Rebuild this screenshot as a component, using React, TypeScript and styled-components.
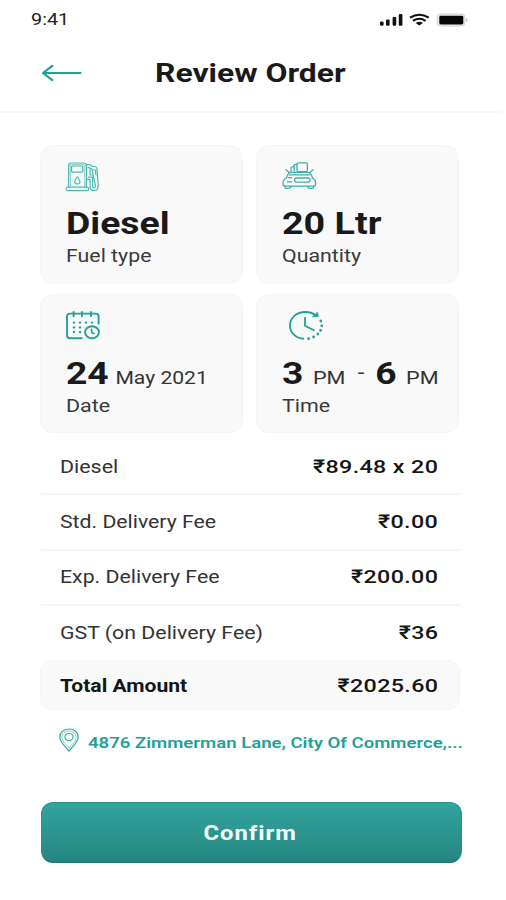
import React from "react";
import styled, { createGlobalStyle } from "styled-components";

const TEAL = "#1fa198";

const GlobalStyle = createGlobalStyle`
  *, *::before, *::after { box-sizing: border-box; }
  body {
    margin: 0;
    background: #fff;
    font-family: Roboto, "Noto Sans", sans-serif;
    color: #1a1a1a;
  }
`;

const Screen = styled.div`
  width: 506px;
  height: 900px;
  display: flex;
  flex-direction: column;
  background: #fff;
  overflow: hidden;
`;

/* Expanded-width lettering, anchored to one edge of its box. */
const Wide = styled.span<{ $x?: number; $from?: string }>`
  display: inline-block;
  white-space: nowrap;
  transform: scaleX(${(p) => p.$x ?? 1.2});
  transform-origin: ${(p) => p.$from ?? "left"} center;
`;

const StatusBar = styled.div`
  height: 38px;
  padding: 0 38px 0 31px;
  display: flex;
  justify-content: space-between;
  align-items: center;
`;

const Clock = styled.div`
  padding-top: 2px;
  font-size: 16.5px;
  line-height: 20px;
  color: #222;
`;

const StatusIcons = styled.svg`
  width: 90px;
  height: 16px;
  margin-top: 2px;
  display: block;
`;

const Header = styled.header`
  width: 501px;
  height: 75px;
  padding: 0 0 4px 41px;
  display: flex;
  align-items: center;
  border-bottom: 2px solid #f7f7f7;
`;

const BackButton = styled.button`
  width: 42px;
  height: 20px;
  padding: 0;
  border: 0;
  background: none;
  svg { display: block; }
`;

const Title = styled.h1`
  margin: 1px 0 0 72px;
  font-size: 26px;
  line-height: 32px;
  font-weight: 700;
`;

const Cards = styled.section`
  margin: 32px 0 0 40px;
  display: grid;
  grid-template-columns: 203px 203px;
  grid-template-rows: 139px 139px;
  gap: 10px 13px;
`;

const Card = styled.article<{ $drop?: number }>`
  padding: 15px 0 0 25px;
  border: 1px solid #f5f5f5;
  border-radius: 13px;
  background: #f9f9f9;
  svg {
    display: block;
    margin: 0 0 ${(p) => p.$drop ?? 0}px -1px;
  }
`;

const CardValue = styled.div`
  height: 32px;
  padding-top: 15px;
  box-sizing: content-box;
  font-size: 31px;
  line-height: 32px;
  font-weight: 700;
`;

const Part = styled.span<{ $gap: number; $small?: boolean }>`
  margin-left: ${(p) => p.$gap}px;
  font-size: ${(p) => (p.$small ? 18 : 31)}px;
  font-weight: ${(p) => (p.$small ? 400 : 700)};
  color: ${(p) => (p.$small ? "#333" : "inherit")};
`;

const MonthYear = styled(Part)`
  font-size: 17.6px;
`;

const Dash = styled(Part)`
  font-size: 20px;
  position: relative;
  top: -5px;
`;

const CardLabel = styled.div`
  margin-top: 6px;
  font-size: 18px;
  line-height: 20px;
  color: #3a3a3a;
`;

const Fees = styled.section`
  width: 420px;
  margin: 5px 0 0 41px;
`;

const Fee = styled.div`
  height: 55.4px;
  padding: 0 23px 0 19px;
  display: flex;
  align-items: center;
  justify-content: space-between;
  & + & { border-top: 2px solid #f6f6f6; padding-bottom: 1px; }
  &:first-child { padding-top: 1px; }
`;

const FeeName = styled.div<{ $bold?: boolean }>`
  font-size: 18px;
  font-weight: ${(p) => (p.$bold ? 700 : 400)};
  color: ${(p) => (p.$bold ? "#161616" : "#333")};
`;

const Amount = styled.div`
  font-size: 19px;
  font-weight: 500;
  letter-spacing: 0.3px;
  color: #161616;
`;

const Total = styled.div`
  width: 420px;
  height: 50px;
  margin-left: 40px;
  padding: 2px 21px 0 19px;
  display: flex;
  align-items: center;
  justify-content: space-between;
  border: 1px solid #f5f5f5;
  border-radius: 12px;
  background: #f9f9f9;
`;

const Address = styled.div`
  height: 24px;
  margin: 18px 0 0 59px;
  display: flex;
  align-items: center;
  gap: 9px;
  font-size: 15.5px;
  line-height: 20px;
  font-weight: 600;
  color: ${TEAL};
  svg { display: block; flex: none; }
`;

const AddressText = styled.div`
  padding-top: 6px;
`;

const Confirm = styled.button`
  width: 421px;
  height: 61px;
  margin: 50px 0 0 40.5px;
  padding: 2px 2px 0 0;
  border: 1px solid #25918a;
  border-bottom-color: #1b756f;
  border-radius: 12px;
  background: linear-gradient(#31a59e, #25857f);
  color: #f4fffd;
  font: 700 20px Roboto, sans-serif;
  letter-spacing: 0.8px;
`;

const PhoneStatus = () => (
  <StatusIcons viewBox="378 12 90 16">
    <g fill="#111">
      <rect x="380" y="21.6" width="3.6" height="4.2" rx="1.2" />
      <rect x="386" y="19.6" width="3.6" height="6.2" rx="1" />
      <rect x="392.6" y="17" width="3.6" height="8.8" rx="1" />
      <rect x="398.8" y="14" width="3.6" height="11.8" rx="1" />
      <path d="M419.3 25.6 L415.7 22.9 Q419.3 20.6 422.9 22.9 Z" />
    </g>
    <g fill="none" stroke="#111" strokeWidth="2">
      <path d="M410 17.7 Q419.3 11.6 428.8 17.7" />
      <path d="M413 20.9 Q419.3 16.8 425.7 20.9" />
    </g>
    <rect x="437.2" y="14" width="27.6" height="12" rx="3" fill="#eee" stroke="#d0d0d0" />
    <rect x="439.3" y="15.8" width="24" height="8.6" rx="1.4" fill="#050505" />
    <path d="M466.2 18 Q468.8 20 466.2 22 Z" fill="#aaa" />
  </StatusIcons>
);

const ArrowIcon = () => (
  <svg width="42" height="20" viewBox="41 63 42 20" fill="none" stroke={TEAL} strokeWidth="2.2" strokeLinecap="round" strokeLinejoin="round">
    <path d="M80.5 73 H43 M52.3 65.8 L43 73 L52.3 80.2" />
  </svg>
);

const FuelIcon = () => (
  <svg width="36" height="32" viewBox="65 160 36 32" fill="none" stroke="#4dbab1" strokeWidth="1.2" strokeLinejoin="round" strokeLinecap="round">
    <path d="M68.6 186 V164.4 Q68.6 162 71.2 162 H83.6 Q86.4 162 86.4 164.4 V186" />
    <path d="M70.3 186 V165 Q70.3 163.6 71.8 163.6 H83 Q84.7 163.6 84.7 165 V186" strokeWidth=".7" />
    <rect x="66.2" y="186.2" width="22.4" height="3.5" rx="1.5" />
    <rect x="71.6" y="165" width="11.2" height="6.2" rx="1" />
    <path d="M77.3 175.8 Q73.7 180.3 75 182 Q77.3 184 79.7 182 Q80.8 180.2 77.3 175.8 Z" />
    <path d="M86.4 163.7 H90 L92.4 165.5 H95.2 Q97 166 97 168.4 L98.2 184.5 Q98.2 189.6 94 189.6 Q90.3 189.6 90.1 185.5 V178.4 H86.4" />
    <path d="M88 166.4 L92 168 L95.4 184.5 Q95.4 187 94 187 Q92.6 187 92.6 185 V176.2 H88.2 M90 167.2 V174 H93 M92.7 169 H95.3 L96 174" />
  </svg>
);

const CarIcon = () => (
  <svg width="36" height="32" viewBox="281 161 36 32" fill="none" stroke="#3db1a8" strokeWidth="1.3" strokeLinejoin="round" strokeLinecap="round">
    <rect x="297" y="162.8" width="10.4" height="8.8" rx="1.5" />
    <path d="M291 171.6 V168 Q291 166.8 292.4 166.8 H294 V165.4 Q294 164.3 295.4 164.3 H297 M294.2 167 V171.5" />
    <path d="M286 169.8 L289.3 172.5 M313 169.8 L309.6 172.5" />
    <path d="M291 172.4 H308.2 Q310.4 172.4 311.2 174.4 L312.5 178 Q315.6 179.6 315.6 183.2 V184.6 Q315.6 186.2 313.7 186.2 H285.3 Q283 186.2 283 184.5 V183.2 Q283 179.5 286.4 178 L288 174.3 Q288.8 172.4 291 172.4 Z" />
    <path d="M289.5 174.9 H309.7" />
    <path d="M285 186.3 V187.2 Q285 188.4 286.5 188.4 H289 Q290.4 188.4 291.3 186.3 M307.4 186.3 Q308.2 188.4 309.6 188.4 H312.1 Q313.6 188.4 313.6 187.2 V186.3" />
    <rect x="294.6" y="178" width="15.4" height="4.1" rx="2" />
    <path d="M288.3 177.7 H291.6 M287.5 181.9 H291.6" />
  </svg>
);

const CalendarIcon = () => (
  <svg width="36" height="32" viewBox="65 310 36 32" fill="none" stroke={TEAL} strokeWidth="1.9" strokeLinecap="round" strokeLinejoin="round">
    <path d="M98.6 323.5 V316.3 Q98.6 313.6 95.7 313.6 H70 Q67 313.6 67 316.3 V335.2 Q67 338.2 70 338.2 H81.8" />
    <path d="M73.6 312 V316.2 M82 312 V316.2 M91 312 V316.2" />
    <g stroke="none" fill={TEAL}>
      {[74, 80, 86, 92].map((x) => <circle key={x} cx={x} cy="322.6" r="1.2" />)}
      {[74, 80].map((x) => <circle key={x} cx={x} cy="327.4" r="1.2" />)}
      {[74, 80].map((x) => <circle key={x} cx={x} cy="332" r="1.2" />)}
    </g>
    <ellipse cx="92" cy="332.3" rx="6.9" ry="6" />
    <path d="M91.6 329.2 V332.4 L94 333.5" strokeWidth="1.6" />
  </svg>
);

const TimeIcon = () => (
  <svg width="44" height="32" viewBox="281 310 44 32" fill="none" stroke={TEAL} strokeWidth="1.8" strokeLinecap="round" strokeLinejoin="round">
    <path d="M315.5 315.2 Q311.5 312 305.4 312 C296.5 312 289.9 318 289.9 325.3 C289.9 332.6 296 338.2 303.2 338.7" />
    <path d="M305 317.6 V325.8 L314 330.2" />
    <path d="M317.6 312.6 L318.2 316.6 L312.8 316.6 Z" fill={TEAL} strokeWidth=".8" />
    <g stroke="none" fill={TEAL}>
      <circle cx="308.6" cy="338.7" r="1.4" />
      <circle cx="313.6" cy="337" r="1.4" />
      <circle cx="317.8" cy="334" r="1.4" />
      <circle cx="320.6" cy="330.3" r="1.4" />
      <circle cx="321.8" cy="325.8" r="1.4" />
      <circle cx="320.8" cy="321" r="1.4" />
    </g>
  </svg>
);

const PinIcon = () => (
  <svg width="20" height="24" viewBox="59 728 20 24" fill="none" stroke="#3aaba3" strokeWidth="1.2" strokeLinejoin="round">
    <path d="M69 751.2 C65.8 746.5 59.8 742.2 59.8 737.2 C59.8 732.4 63.8 729 69 729 C74.2 729 78.2 732.4 78.2 737.2 C78.2 742.2 72.2 746.5 69 751.2 Z" />
    <path d="M69 748.2 C66.5 744.6 61.8 741 61.8 737.2 C61.8 733.5 65 730.9 69 730.9 C73 730.9 76.2 733.5 76.2 737.2 C76.2 741 71.5 744.6 69 748.2 Z" strokeWidth=".6" />
    <ellipse cx="69" cy="737" rx="4.1" ry="3.5" />
  </svg>
);

const fees = [
  { name: "Diesel", nameX: 1.19, amount: "₹89.48 x 20" },
  { name: "Std. Delivery Fee", nameX: 1.18, amount: "₹0.00" },
  { name: "Exp. Delivery Fee", nameX: 1.183, amount: "₹200.00" },
  { name: "GST (on Delivery Fee)", nameX: 1.185, amount: "₹36" },
];

export default function App() {
  return (
    <Screen>
      <GlobalStyle />
      <StatusBar>
        <Clock><Wide $x={1.2}>9:41</Wide></Clock>
        <PhoneStatus />
      </StatusBar>
      <Header>
        <BackButton aria-label="Back"><ArrowIcon /></BackButton>
        <Title><Wide $x={1.225}>Review Order</Wide></Title>
      </Header>
      <Cards>
        <Card>
          <FuelIcon />
          <CardValue><Wide $x={1.205}>Diesel</Wide></CardValue>
          <CardLabel><Wide $x={1.185}>Fuel type</Wide></CardLabel>
        </Card>
        <Card>
          <CarIcon />
          <CardValue><Wide $x={1.215}>20 Ltr</Wide></CardValue>
          <CardLabel><Wide $x={1.185}>Quantity</Wide></CardLabel>
        </Card>
        <Card $drop={1}>
          <CalendarIcon />
          <CardValue>
            <Wide $x={1.2}>
              <Part $gap={0}>24</Part>
              <MonthYear $gap={5.6} $small>May 2021</MonthYear>
            </Wide>
          </CardValue>
          <CardLabel><Wide $x={1.19}>Date</Wide></CardLabel>
        </Card>
        <Card $drop={1}>
          <TimeIcon />
          <CardValue>
            <Wide>
              <Part $gap={0}>3</Part>
              <Part $gap={8} $small>PM</Part>
              <Dash $gap={10.2} $small>-</Dash>
              <Part $gap={9.2}>6</Part>
              <Part $gap={7.8} $small>PM</Part>
            </Wide>
          </CardValue>
          <CardLabel><Wide $x={1.19}>Time</Wide></CardLabel>
        </Card>
      </Cards>
      <Fees>
        {fees.map((f) => (
          <Fee key={f.name}>
            <FeeName><Wide $x={f.nameX}>{f.name}</Wide></FeeName>
            <Amount><Wide $x={1.225} $from="right">{f.amount}</Wide></Amount>
          </Fee>
        ))}
      </Fees>
      <Total>
        <FeeName $bold><Wide $x={1.172}>Total Amount</Wide></FeeName>
        <Amount><Wide $x={1.225} $from="right">₹2025.60</Wide></Amount>
      </Total>
      <Address>
        <PinIcon />
        <AddressText><Wide $x={1.198}>4876 Zimmerman Lane, City Of Commerce,...</Wide></AddressText>
      </Address>
      <Confirm><Wide $x={1.19} $from="center">Confirm</Wide></Confirm>
    </Screen>
  );
}
